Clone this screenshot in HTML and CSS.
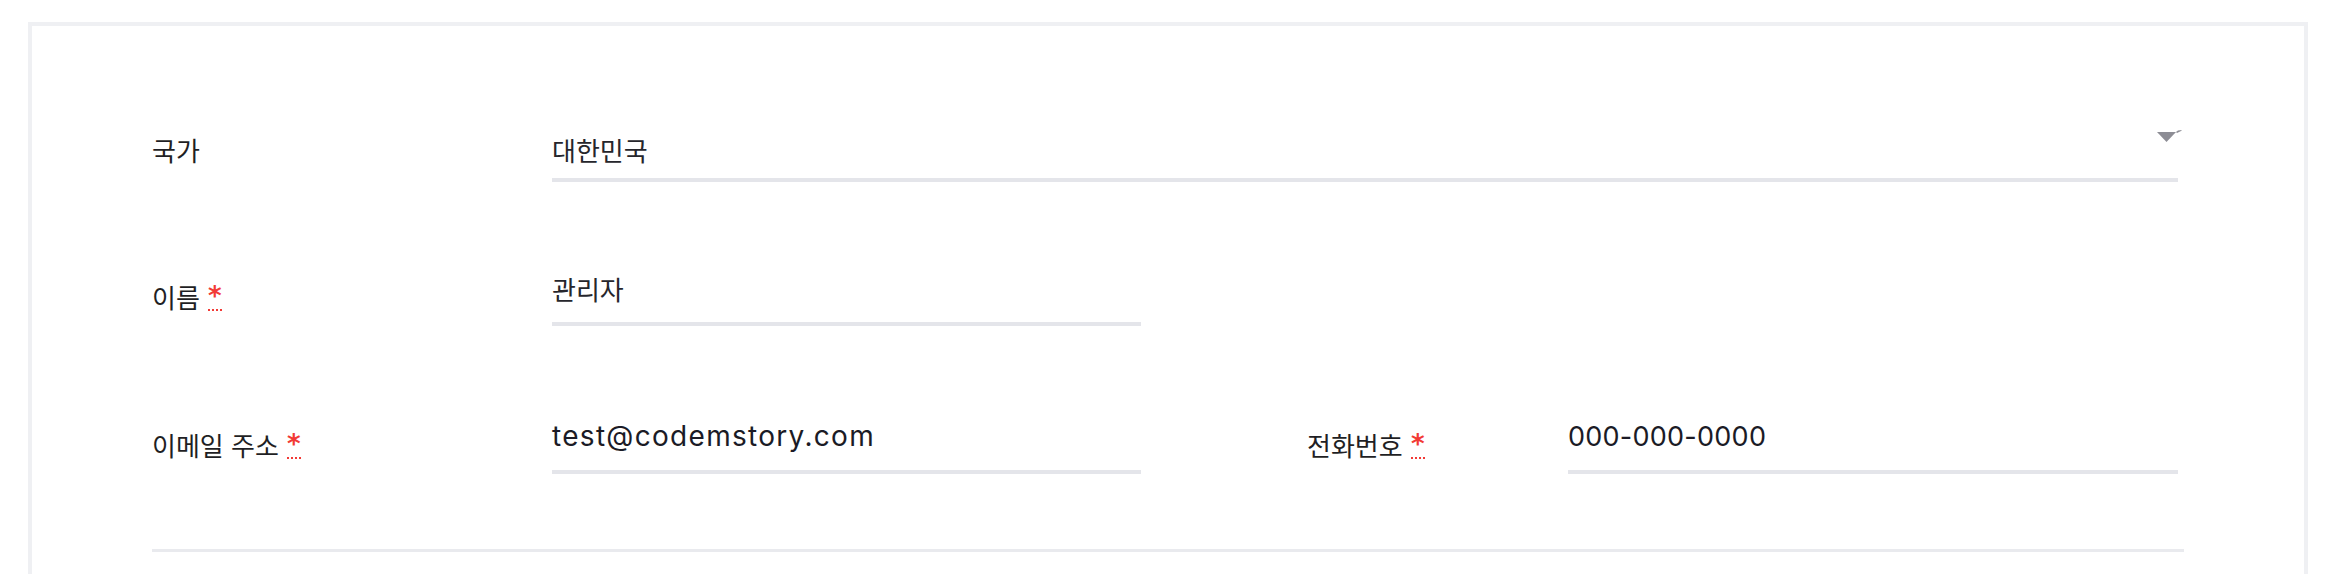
FILE: index.html
```html
<!DOCTYPE html>
<html lang="ko">
<head>
<meta charset="utf-8">
<title>계정 정보</title>
<link rel="stylesheet" href="styles.css">
</head>
<body>
<div class="card">
  <form class="form">
    <div class="row row-country">
      <label class="label"><span class="label-text">국가</span></label>
      <div class="field select-field span-all">
        <span class="value ko">대한민국</span>
        <svg class="caret" width="26" height="13" viewBox="0 0 26 13" aria-hidden="true">
          <polygon points="0,2 19,2 9.5,12" fill="#8d8d95"/>
          <polygon points="19,2 21,0.5 25,0 24,1 20,3" fill="#8d8d95"/>
        </svg>
      </div>
    </div>

    <div class="row row-name">
      <label class="label"><span class="label-text">이름</span><abbr class="req" title="required">*</abbr></label>
      <div class="field input-field">
        <span class="value ko">관리자</span>
      </div>
    </div>

    <div class="row row-contact">
      <label class="label"><span class="label-text">이메일 주소</span><abbr class="req" title="required">*</abbr></label>
      <div class="field input-field">
        <span class="value latin email">test@codemstory.com</span>
      </div>
      <div class="spacer"></div>
      <label class="label"><span class="label-text">전화번호</span><abbr class="req" title="required">*</abbr></label>
      <div class="field input-field">
        <span class="value latin phone">000-000-0000</span>
      </div>
    </div>

    <div class="separator"></div>
  </form>
</div>
</body>
</html>
```

FILE: styles.css
```css
html, body {
  margin: 0;
  padding: 0;
  background: #ffffff;
}

body {
  font-family: "Noto Sans CJK KR", "Noto Sans", sans-serif;
  color: #222228;
}

.card {
  margin: 22px 28px 0;
  border: 4px solid #eff0f3;
  border-bottom: none;
  padding: 107px 120px 22px;
}

.form {
  width: 2032px;
}

.row {
  display: grid;
  grid-template-columns: 400px 589px 166px 261px 610px;
  align-items: end;
}

.row-name {
  margin-top: 90px;
}

.row-contact {
  margin-top: 94px;
}

.span-all {
  grid-column: 2 / 6;
}

.label {
  display: flex;
  align-items: flex-start;
  line-height: 33px;
  font-size: 26px;
  color: #1f1f24;
  padding-bottom: 13px;
}

.row-country .label {
  padding-bottom: 16px;
}

.label-text {
  white-space: pre;
}

.req {
  display: inline-block;
  margin: 4px 0 0 8px;
  height: 25px;
  width: 14px;
  font-family: "DejaVu Sans", sans-serif;
  font-weight: 700;
  font-size: 26px;
  line-height: 25px;
  text-align: center;
  color: #f23a36;
  text-decoration: none;
  border-bottom: 2px dotted #f23a36;
}

.field {
  position: relative;
  line-height: 33px;
  border-bottom: 4px solid #e4e5ea;
}

.select-field {
  padding-bottom: 12px;
}

.input-field {
  padding-bottom: 17px;
}

.value {
  display: block;
  white-space: nowrap;
}

.value.ko {
  font-size: 26px;
  color: #26262c;
}

.value.latin {
  font-family: "Inter", "Noto Sans CJK KR", sans-serif;
  font-weight: 400;
  color: #1b1b26;
}

.value.email {
  font-size: 28px;
  letter-spacing: 1.3px;
}

.value.phone {
  font-size: 27px;
  letter-spacing: 0.25px;
}

.caret {
  position: absolute;
  right: -5px;
  top: -3px;
}

.separator {
  margin-top: 75px;
  height: 3px;
  background: #e9eaee;
}
```
